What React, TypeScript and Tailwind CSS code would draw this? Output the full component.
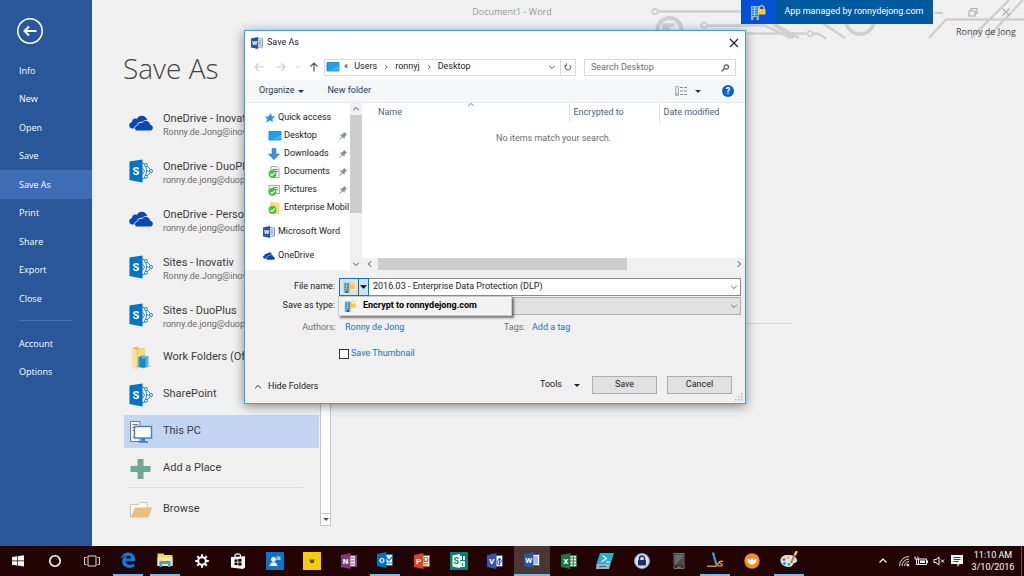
import React from 'react';

interface IconProps {
  className?: string;
}

interface OfficeIconProps extends IconProps {
  letter: string;
  color: string;
  kind?: 'lines' | 'grid' | 'mail' | 'chart' | 'tabs' | 'shapes';
}

const OfficeIcon: React.FC<OfficeIconProps> = ({ letter, color, kind = 'lines', className = 'h-4 w-4' }) => (
  <svg viewBox="0 0 16 16" className={className} aria-hidden="true">
    <rect x="8" y="2.5" width="7.5" height="11" fill="#fff" stroke={color} strokeWidth="0.8" />
    {kind === 'lines' && <path d="M10 5h4M10 7h4M10 9h4M10 11h4" stroke={color} strokeWidth="0.8" />}
    {kind === 'grid' && <path d="M9 5h6M9 8h6M9 11h6M12.3 3v10" stroke={color} strokeWidth="1" />}
    {kind === 'mail' && <path d="M9 5l3 3.5L15.3 5M9 11h6" stroke={color} strokeWidth="1.2" fill="none" />}
    {kind === 'chart' && (
      <>
        <circle cx="12" cy="6.5" r="2" fill="none" stroke={color} strokeWidth="1.2" />
        <path d="M10 10.5h4M10 12h4" stroke={color} strokeWidth="0.8" />
      </>
    )}
    {kind === 'tabs' && <path d="M10 5h3M10 8h3M10 11h3M14.3 3v10" stroke={color} strokeWidth="1.2" />}
    {kind === 'shapes' && <path d="M10 9l2.5-4L14.5 8l-3 4zM12.5 5v7" stroke={color} strokeWidth="1" fill="none" />}
    <path d="M0 2l9.5-2v16L0 14z" fill={color} />
    <text x="4.7" y="11" textAnchor="middle" fontSize="8" fontWeight="700" fill="#fff">
      {letter}
    </text>
  </svg>
);

const CloudIcon: React.FC<IconProps> = ({ className }) => (
  <svg viewBox="0 0 24 16" className={className} fill="#0b47b0" aria-hidden="true">
    <path d="M5.2 13.5H3.6C1.4 13.5.2 12 .2 10.200c0-1.700 1.200-3 2.800-3.300C3 4.900 4.500 3.500 6.300 3.500c.6 0 1.100.1 1.600.4C8.900 2 10.700.8 12.900.8c2.600 0 4.600 1.700 5.200 4.200-2-.3-3.800.5-4.800 2.100-2.500-.9-5 .6-5.200 3.100-1.700.2-2.900 1.400-2.900 3.300z" />
    <path d="M8.700 15.600c-1.700 0-2.700-1-2.700-2.400 0-1.300 1-2.300 2.500-2.400.1-2.300 2.400-3.800 4.800-2.800 1-1.600 2.500-2.400 4.300-2.100 2 .3 3.300 1.900 3.400 3.900 1.700.1 2.800 1.300 2.800 2.900 0 1.700-1.200 2.900-2.900 2.900z" />
  </svg>
);

const SharePointIcon: React.FC<IconProps> = ({ className }) => (
  <svg viewBox="0 0 24 24" className={className} aria-hidden="true">
    <g fill="none" stroke="#2a86d0" strokeWidth="1">
      <path d="M13 4l3 1M18 7l3.500 3.500M21.500 13.500L18 17M16 19l-3 1.200M16.700 8c1 2.500 1 5.500 0 8M18 12h3M13 8.500l2.500 3.500-2.500 3.500" />
      <circle cx="17" cy="6.200" r="1.500" fill="#f0f0f0" />
      <circle cx="17" cy="17.800" r="1.500" fill="#f0f0f0" />
      <circle cx="22" cy="12" r="1.500" fill="#f0f0f0" />
    </g>
    <path d="M.5 2.500L13.500.5v23L.5 21z" fill="#0072c6" />
    <text x="7" y="16" textAnchor="middle" fontSize="11" fontWeight="700" fill="#fff">
      S
    </text>
  </svg>
);

const WorkFolderIcon: React.FC<IconProps> = ({ className }) => (
  <svg viewBox="0 0 24 24" className={className} aria-hidden="true">
    <path d="M3 2l5-1.500 2 1.500h6v17l-8 3-5-2z" fill="#e6bf5a" />
    <path d="M3 2l5 2v19.500L3 21z" fill="#f8e296" />
    <path d="M9 3l7-1v15l-7 3z" fill="#f5d982" />
    <path d="M9.500 11l4-1.500V22l-4-1z" fill="#1c93c8" />
    <path d="M13.500 9.500l6 .5v11l-6 1.500z" fill="#4bbce8" />
    <path d="M12.500 13l4-1v9l-4 .5z" fill="#2386bd" />
    <path d="M19.500 19l3 .5-2.500 2z" fill="#d3d3d3" />
  </svg>
);

const ThisPcIcon: React.FC<IconProps> = ({ className }) => (
  <svg viewBox="0 0 24 24" className={className} aria-hidden="true">
    <path d="M1.500 1.500h9.500v20H1.500z" fill="#f3f3f3" stroke="#777" strokeWidth="1" />
    <path d="M3.500 4.500h5.500M3.500 7.500h2M3.500 10.500h2M3.500 17h2" stroke="#777" strokeWidth="1" />
    <rect x="5.500" y="6.500" width="17" height="11.500" fill="#fff" stroke="#3f7fc0" strokeWidth="1.400" />
    <path d="M12.500 18h3.500v3h3v1.800H9.500V21h3z" fill="#3f7fc0" />
  </svg>
);

const PlusIcon: React.FC<IconProps> = ({ className }) => (
  <svg viewBox="0 0 24 24" className={className} aria-hidden="true">
    <path d="M8.500 2h6v7H21.500v6h-7v7h-6v-7h-7V9h7z" fill="#72a694" />
  </svg>
);

const BrowseIcon: React.FC<IconProps> = ({ className }) => (
  <svg viewBox="0 0 24 24" className={className} aria-hidden="true">
    <path d="M1.500 19V6.500h8l2-2h6.500v5" fill="#fff" stroke="#e3bd84" strokeWidth="1" />
    <path d="M1.500 19.500L6 9.500h17l-3.500 10z" fill="#e8be82" />
  </svg>
);

const MonitorIcon: React.FC<IconProps> = ({ className }) => (
  <svg viewBox="0 0 14 12" className={className} aria-hidden="true">
    <path d="M1 1.500h12v8.500H1z" fill="#1ba1f2" stroke="#1579c0" strokeWidth="0.8" />
    <path d="M4 9.500l9-5v5z" fill="#3db4fb" />
  </svg>
);

const StarIcon: React.FC<IconProps> = ({ className }) => (
  <svg viewBox="0 0 12 12" className={className} aria-hidden="true">
    <path d="M7 1l.7 3.300 3.500.2-2.700 2.200.3 3.500-2.600-1.900L2 11l1.500-4L.8 4.800l3.700-.4z" fill="#2494e4" />
  </svg>
);

const DownloadIcon: React.FC<IconProps> = ({ className }) => (
  <svg viewBox="0 0 12 12" className={className} aria-hidden="true">
    <path d="M4 .5h4V6h3.500L6 11.800.5 6H4z" fill="#3a93dd" stroke="#1f6fb8" strokeWidth="0.500" />
  </svg>
);

interface SyncedIconProps extends IconProps {
  kind: 'doc' | 'picture' | 'folder';
}

const SyncedIcon: React.FC<SyncedIconProps> = ({ kind, className }) => (
  <svg viewBox="0 0 12 12" className={className} aria-hidden="true">
    {kind === 'doc' && <path d="M3 .5h6L11 2.500v9H3z" fill="#f4f6f8" stroke="#8b98a5" strokeWidth="0.800" />}
    {kind === 'picture' && <path d="M1 1.500h10.500v8H1z" fill="#e4f1fa" stroke="#8b98a5" strokeWidth="0.800" />}
    {kind === 'folder' && <path d="M2 0h4l1 1h4.500v11H2z" fill="#f9d979" />}
    {kind !== 'folder' && <path d="M5 3.500h4.500M7 5.500h3" stroke="#4a90c8" strokeWidth="1" />}
    <circle cx="4.500" cy="7.800" r="3.900" fill="#45bd35" />
    <path d="M2.500 8l1.500 1.500 2.800-3" stroke="#fff" strokeWidth="1.200" fill="none" />
  </svg>
);

const PinIcon: React.FC<IconProps> = ({ className }) => (
  <svg viewBox="0 0 10 10" className={className} aria-hidden="true">
    <path d="M6 .8l3.200 3.200-1.200.3-1.300 1.400-.3 2.200-1.700-1.700L1.500 9l-.4-.4 2.700-2.900-1.900-1.900 2.200-.2 1.500-1.500z" fill="#84909c" />
  </svg>
);

const BriefcaseLockIcon: React.FC<IconProps> = ({ className }) => (
  <svg viewBox="0 0 18 16" className={className} aria-hidden="true">
    <path d="M2 2h8v14H2z" fill="#74c0dc" />
    <path d="M3 4h6M3 6.500h6M3 9h6M3 11.500h6" stroke="#2b6f93" strokeWidth="1.200" />
    <path d="M5.500 2v11" stroke="#c4e7f2" strokeWidth="0.700" />
    <path d="M4.500 13h3v3h-3z" fill="#4d4d4d" />
    <path d="M10.500 5.500V3.500a2.300 2.300 0 014.500 0v2" stroke="#e9c46a" strokeWidth="1.300" fill="none" />
    <rect x="9" y="5" width="7.500" height="5.500" fill="#ffc931" />
  </svg>
);

interface GlyphProps extends IconProps {
  d: string;
}

// Small stroked glyph on a 10x10 grid, coloured by the text colour
const Glyph: React.FC<GlyphProps> = ({ d, className }) => (
  <svg viewBox="0 0 10 10" className={className} fill="none" stroke="currentColor" strokeWidth="1.200" aria-hidden="true">
    <path d={d} />
  </svg>
);

const UP = 'M1.500 6.500L5 3l3.500 3.500';
const DOWN = 'M1.500 3.500L5 7l3.500-3.500';
const LEFT = 'M6.500 1.500L3 5l3.500 3.500';
const RIGHT = 'M3.500 1.500L7 5 3.500 8.500';

const Caret: React.FC<IconProps> = ({ className }) => (
  <svg viewBox="0 0 8 4" className={className} fill="currentColor" aria-hidden="true">
    <path d="M0 0h8L4 4z" />
  </svg>
);

const menuItems = ['Info', 'New', 'Open', 'Save', 'Save As', 'Print', 'Share', 'Export', 'Close'];

const Sidebar: React.FC = () => (
  <nav
    className="w-[92px] shrink-0 bg-[#2a579a] font-['Open_Sans','Noto_Sans',sans-serif] text-[9px] text-white"
    aria-label="File menu"
  >
    <button type="button" aria-label="Back" className="mt-[17px] ml-4 block h-7 w-7">
      <svg viewBox="0 0 28 28" className="h-7 w-7" fill="none" stroke="#fff">
        <circle cx="14" cy="14" r="12.200" strokeWidth="1.500" />
        <path d="M20.500 14H9M13 9.500L8.500 14l4.500 4.500" strokeWidth="2" />
      </svg>
    </button>
    <div className="mt-[11px] flex h-[257px] flex-col">
      {menuItems.map((item) => (
        <button
          key={item}
          type="button"
          className={`flex flex-1 items-center pl-[19px] text-left ${item === 'Save As' ? 'bg-[#3e6db5]' : ''}`}
        >
          {item}
        </button>
      ))}
    </div>
    <hr className="mx-[19px] mt-[7px] border-[#4a74b0]" />
    <div className="mt-2 flex h-[57px] flex-col">
      {['Account', 'Options'].map((item) => (
        <button key={item} type="button" className="flex flex-1 items-center pl-[19px] text-left">
          {item}
        </button>
      ))}
    </div>
  </nav>
);

const accounts = [
  { name: 'OneDrive - Inovativ', mail: 'Ronny.de.Jong@inovativ', icon: 'cloud' },
  { name: 'OneDrive - DuoPlus', mail: 'ronny.de.jong@duoplus', icon: 'sharepoint' },
  { name: 'OneDrive - Personal', mail: 'ronny.de.jong@outlook', icon: 'cloud' },
  { name: 'Sites - Inovativ', mail: 'Ronny.de.Jong@inovativ', icon: 'sharepoint' },
  { name: 'Sites - DuoPlus', mail: 'ronny.de.jong@duoplus', icon: 'sharepoint' },
];

const places = [
  { name: 'Work Folders (Office)', Icon: WorkFolderIcon },
  { name: 'SharePoint', Icon: SharePointIcon },
  { name: 'This PC', Icon: ThisPcIcon },
  { name: 'Add a Place', Icon: PlusIcon },
];

const PlaceList: React.FC = () => (
  <div className="w-[196px] pr-px text-[11px] text-[#3b3b3b]">
    {accounts.map((account) => (
      <button
        key={account.name}
        type="button"
        className="flex h-12 w-full items-center gap-2.5 pl-[5px] text-left whitespace-nowrap"
      >
        {account.icon === 'cloud' ? (
          <CloudIcon className="h-4 w-6 shrink-0" />
        ) : (
          <SharePointIcon className="h-6 w-6 shrink-0" />
        )}
        <span className="pt-1 leading-[14px]">
          <span className="block">{account.name}</span>
          <span className="block text-[9px] leading-[13px] text-[#6a6a6a]">{account.mail}</span>
        </span>
      </button>
    ))}
    <div className="mt-0.5 flex flex-col gap-1">
      {places.map(({ name, Icon }) => (
        <button
          key={name}
          type="button"
          className={`flex h-[33px] items-center gap-2.5 pl-[5px] text-left whitespace-nowrap ${
            name === 'This PC' ? 'bg-[#c2d5f2]' : ''
          }`}
        >
          <Icon className="h-6 w-6 shrink-0" />
          {name}
        </button>
      ))}
    </div>
    <hr className="mt-0.5 mr-4 ml-1 border-[#dcdcdc]" />
    <button type="button" className="mt-[5px] flex h-[33px] items-center gap-2.5 pl-[5px] text-left">
      <BrowseIcon className="h-6 w-6 shrink-0" />
      Browse
    </button>
  </div>
);

const Circuit: React.FC = () => (
  <svg
    viewBox="640 0 384 40"
    className="pointer-events-none absolute top-0 right-0 h-10 w-96"
    fill="none"
    stroke="#d0d0d0"
    strokeWidth="2.500"
    aria-hidden="true"
  >
    <circle cx="655" cy="11.500" r="2.600" strokeWidth="1.800" />
    <path d="M658 11.500h84" />
    <circle cx="669.500" cy="30" r="12" strokeWidth="4" />
    <path d="M664 35V25h10M664 25l11 11" strokeWidth="3.500" />
    <circle cx="704" cy="25" r="2.600" strokeWidth="1.800" />
    <path d="M707 25.500h58l26 12.500M745 33.500h61" />
    <path d="M772 24l22 14M818 20l27 18M775 24l24 14" />
    <circle cx="810" cy="33.500" r="2.600" strokeWidth="1.800" />
    <path d="M813 33.500h5l8 5" />
    <circle cx="860" cy="20" r="14" strokeWidth="4" />
    <path d="M929 38l17-18.500h78M971 38l38-38M987 38l36-38" />
  </svg>
);

const Header: React.FC = () => (
  <header className="font-['Open_Sans','Noto_Sans',sans-serif] text-[9px]">
    <div className="flex h-6 items-center">
      <p className="flex-1 text-center text-[#999]">Document1 - Word</p>
      <div className="relative flex w-[92px] items-center justify-between pr-[13px] pl-0.5 text-[#b0b0b0]">
        <button type="button" aria-label="Minimize" className="h-2.5 w-2.5">
          <Glyph d="M1 6h8" />
        </button>
        <button type="button" aria-label="Restore" className="h-2.5 w-2.5">
          <Glyph d="M1 4h6v5H1zM3 4V1.500h6v5H7" />
        </button>
        <button type="button" aria-label="Close window" className="h-2.5 w-2.5">
          <Glyph d="M1.500 1.500l7 7M8.500 1.500l-7 7" />
        </button>
      </div>
    </div>
    <p className="relative h-4 pr-2 text-right leading-4 text-[#444]">Ronny de Jong</p>
  </header>
);

const ManagedBanner: React.FC = () => (
  <div className="absolute top-0 right-[91px] flex h-6 w-48 items-center bg-[#005a9e] text-[9px] text-white">
    <span className="flex h-full w-[34px] items-center justify-center bg-[#0050d8]">
      <BriefcaseLockIcon className="h-4 w-[18px]" />
    </span>
    <span className="flex-1 text-center whitespace-nowrap">App managed by ronnydejong.com</span>
  </div>
);

const quickItems = [
  { name: 'Desktop', icon: <MonitorIcon className="h-3 w-3.5" />, pinned: true },
  { name: 'Downloads', icon: <DownloadIcon className="h-3 w-3" />, pinned: true },
  { name: 'Documents', icon: <SyncedIcon kind="doc" className="h-3 w-3" />, pinned: true },
  { name: 'Pictures', icon: <SyncedIcon kind="picture" className="h-3 w-3" />, pinned: true },
  { name: 'Enterprise Mobil', icon: <SyncedIcon kind="folder" className="h-3 w-3" />, pinned: false },
];

const FolderTree: React.FC = () => (
  <div className="flex w-[116px] shrink-0">
    <div className="w-[104px] overflow-hidden pt-1.5 whitespace-nowrap">
      <button type="button" className="flex h-[18px] items-center gap-0.5 pl-[18px]">
        <StarIcon className="h-3 w-3" />
        Quick access
      </button>
      {quickItems.map((item) => (
        <button key={item.name} type="button" className="flex h-[18px] w-full items-center pl-[22px]">
          <span className="flex w-4 shrink-0 items-center justify-start">{item.icon}</span>
          <span className="flex-1 text-left">{item.name}</span>
          {item.pinned && <PinIcon className="mr-0.5 h-2.5 w-2.5" />}
        </button>
      ))}
      <button type="button" className="mt-1.5 flex h-[18px] items-center gap-[3px] pl-[17px]">
        <OfficeIcon letter="W" color="#2a579a" className="h-3 w-3" />
        Microsoft Word
      </button>
      <button type="button" className="mt-1.5 flex h-[18px] items-center gap-[3px] pl-[17px]">
        <CloudIcon className="h-3 w-3" />
        OneDrive
      </button>
    </div>
    <div className="flex w-3 flex-col items-center bg-[#f0f0f0] text-[#444]">
      <Glyph d={UP} className="my-0.5 h-2 w-2" />
      <div className="h-[98px] w-3 bg-[#cdcdcd]" />
      <Glyph d={DOWN} className="mt-auto mb-0.5 h-2 w-2" />
    </div>
  </div>
);

const FileList: React.FC = () => (
  <div className="flex flex-1 flex-col">
    <table className="w-full table-fixed text-left text-[#4c607a]">
      <thead>
        <tr className="h-5">
          <th className="relative w-[207px] border-r border-[#e5e5e5] pl-4 font-normal">
            Name
            <Glyph d={UP} className="absolute -top-0.5 left-[105px] h-2 w-2 text-[#777]" />
          </th>
          <th className="w-[90px] border-r border-[#e5e5e5] pl-1 font-normal">Encrypted to</th>
          <th className="pl-1 font-normal">Date modified</th>
        </tr>
      </thead>
      <tbody>
        <tr>
          <td colSpan={3} className="h-8 text-center text-[#6d6d6d]">
            No items match your search.
          </td>
        </tr>
      </tbody>
    </table>
    <div className="mt-auto flex h-3 items-center bg-[#f0f0f0] text-[#444]">
      <Glyph d={LEFT} className="mx-1 h-2 w-2" />
      <div className="h-full w-[249px] bg-[#cdcdcd]" />
      <Glyph d={RIGHT} className="mr-0.5 ml-auto h-2 w-2" />
    </div>
  </div>
);

const SaveForm: React.FC = () => (
  <div className="bg-[#f0f0f0] pt-2 pr-1 pb-[9px]">
    <div className="relative flex h-[18px] items-stretch">
      <label htmlFor="file-name" className="flex w-[93px] items-center justify-end pr-1">
        File name:
      </label>
      <button
        type="button"
        aria-label="Encryption options"
        aria-expanded="true"
        className="flex w-[30px] items-center border border-[#0078d7] bg-[#e1e1e1]"
      >
        <BriefcaseLockIcon className="mx-0.5 h-3 w-[14px]" />
        <span className="flex h-full flex-1 items-center justify-center border-l border-[#555] bg-[#cce4f7] text-black">
          <Caret className="h-1 w-[7px]" />
        </span>
      </button>
      <input
        id="file-name"
        type="text"
        defaultValue="2016.03 - Enterprise Data Protection (DLP)"
        className="min-w-0 flex-1 border border-l-0 border-[#8a8a8a] bg-white pl-1 outline-none"
      />
      <Glyph d={DOWN} className="pointer-events-none absolute top-[5px] right-[3px] h-2 w-2 text-[#666]" />
      {/* Encryption drop-down, opened over the type row */}
      <div
        role="menu"
        className="absolute top-[18px] left-[92px] z-10 w-[174px] border border-[#ccc] bg-[#f2f2f2] shadow-[2px_2px_2px_rgba(0,0,0,0.5)]"
      >
        <button type="button" role="menuitem" className="flex h-[18px] items-center gap-1.5 pl-1 font-bold text-black">
          <BriefcaseLockIcon className="h-3 w-[14px]" />
          Encrypt to ronnydejong.com
        </button>
      </div>
    </div>
    <div className="relative mt-px flex h-[18px]">
      <label htmlFor="file-type" className="flex w-[93px] items-center justify-end pr-1">
        Save as type:
      </label>
      <select id="file-type" className="flex-1 appearance-none border border-[#adadad] bg-[#e1e1e1] outline-none">
        <option value="docx"></option>
      </select>
      <Glyph d={DOWN} className="pointer-events-none absolute top-[5px] right-[3px] h-2 w-2 text-[#666]" />
    </div>
    <div className="mt-1 flex h-[18px] items-center">
      <span className="w-[93px] pr-[3px] text-right text-[#707070]">Authors:</span>
      <a href="#authors" className="w-[162px] pl-1.5 text-[#1a6fcb]">
        Ronny de Jong
      </a>
      <span className="w-[31px] pl-[3px] text-[#707070]">Tags:</span>
      <a href="#tags" className="text-[#1a6fcb]">
        Add a tag
      </a>
    </div>
    <label className="mt-2 ml-[93px] flex h-[18px] w-fit items-center gap-0.5 text-[#1a6fcb]">
      <input type="checkbox" className="h-2.5 w-2.5 appearance-none border border-[#333] bg-white" />
      Save Thumbnail
    </label>
    <div className="mt-[13px] flex h-[18px] items-stretch pr-[9px]">
      <button type="button" className="mt-1 flex items-center gap-1.5 pl-2">
        <Glyph d={UP} className="h-2 w-2" />
        Hide Folders
      </button>
      <button type="button" className="mr-3 ml-auto flex items-center gap-3">
        Tools
        <Caret className="h-[3px] w-1.5" />
      </button>
      <button type="button" className="w-[65px] border border-[#adadad] bg-[#e1e1e1]">
        Save
      </button>
      <button type="button" className="ml-2.5 w-[65px] border border-[#adadad] bg-[#e1e1e1]">
        Cancel
      </button>
    </div>
  </div>
);

const SaveDialog: React.FC = () => (
  <section
    role="dialog"
    aria-label="Save As"
    className="absolute top-[30px] left-[244px] w-[502px] border border-[#4a9bdc] bg-white text-[9px] text-[#222] shadow-[0_2px_10px_rgba(0,0,0,0.45)]"
  >
    <div className="flex h-[23px] items-center px-1.5">
      <OfficeIcon letter="W" color="#2a579a" className="h-3 w-3" />
      <h2 className="ml-1">Save As</h2>
      <button type="button" aria-label="Close" className="ml-auto h-2.5 w-2.5">
        <Glyph d="M1 1l8 8M9 1L1 9" />
      </button>
    </div>
    <div className="flex h-[26px] items-center px-[9px]">
      <button type="button" aria-label="Back" className="h-2.5 w-2.5 text-[#ccc]">
        <Glyph d="M9.500 5H1M4.500 1.500L1 5l3.500 3.500" />
      </button>
      <button type="button" aria-label="Forward" className="ml-3 h-2.5 w-2.5 text-[#ccc]">
        <Glyph d="M.5 5H9M5.500 1.500L9 5 5.500 8.500" />
      </button>
      <Glyph d={DOWN} className="ml-[9px] h-1.5 w-1.5 text-[#ccc]" />
      <button type="button" aria-label="Up" className="ml-2 h-2.5 w-2.5 text-[#555]">
        <Glyph d="M5 9.500V1M1.500 4.500L5 1l3.500 3.500" />
      </button>
      <div className="ml-[5px] flex h-[17px] flex-1 items-center border border-[#d9d9d9]">
        <MonitorIcon className="mx-px h-3 w-3.5" />
        <span className="ml-[3px]">«</span>
        <span className="ml-1.5">Users</span>
        <Glyph d={RIGHT} className="mx-1.5 h-1.5 w-1.5" />
        <span>ronnyj</span>
        <Glyph d={RIGHT} className="mx-1.5 h-1.5 w-1.5" />
        <span>Desktop</span>
        <Glyph d={DOWN} className="mr-1 ml-auto h-2 w-2 text-[#555]" />
        <button type="button" aria-label="Refresh" className="h-full border-l border-[#d9d9d9] px-[3px] text-[#555]">
          <Glyph d="M3 2.500a3.500 3.500 0 104 0M3 .5v2.500H.8" className="h-2 w-2" />
        </button>
      </div>
      <div className="relative ml-2 w-[152px]">
        <input
          type="search"
          aria-label="Search Desktop"
          placeholder="Search Desktop"
          className="block h-[17px] w-full border border-[#d9d9d9] pl-1.5 outline-none placeholder:text-[#6d6d6d]"
        />
        <Glyph
          d="M4.500 5.500L1.500 8.500M8.500 4a2.200 2.200 0 11-4.400 0A2.200 2.200 0 018.500 4z"
          className="pointer-events-none absolute top-1 right-1.5 h-2.5 w-2.5 text-[#555]"
        />
      </div>
    </div>
    <div className="flex h-[23px] items-center border-b border-[#e8e9ea] bg-[#f5f6f7] pr-[11px] pl-[14px] text-[#1e395b]">
      <button type="button" className="flex items-center gap-1">
        Organize
        <Caret className="h-[3px] w-1.5" />
      </button>
      <button type="button" className="ml-[23px]">
        New folder
      </button>
      <button type="button" aria-label="Change view" className="ml-auto flex items-center gap-2">
        <svg viewBox="0 0 12 10" className="h-2.5 w-3" aria-hidden="true">
          <path d="M.5.5h3v9h-3z" fill="#e6eaee" stroke="#a0a7ae" strokeWidth="0.800" />
          <path d="M1 8h2" stroke="#d88" strokeWidth="1.500" />
          <path d="M5 1.500h3M9 1.500h3M5 5h3M9 5h3M5 8.500h3M9 8.500h3" stroke="#848c94" strokeWidth="1" />
        </svg>
        <Caret className="h-[3px] w-1.5" />
      </button>
      <button
        type="button"
        aria-label="Help"
        className="ml-[21px] h-3 w-3 rounded-full bg-[#0a63c4] text-center leading-3 font-bold text-white"
      >
        ?
      </button>
    </div>
    <div className="flex h-[167px] pl-px">
      <FolderTree />
      <FileList />
    </div>
    <div className="bg-[#f0f0f0] pl-px">
      <SaveForm />
    </div>
    <svg viewBox="0 0 8 8" className="absolute right-0.5 bottom-0.5 h-2 w-2 text-[#b5b5b5]" fill="currentColor" aria-hidden="true">
      <path d="M6 0h1.500v1.500H6zM6 3h1.500v1.500H6zM6 6h1.500v1.500H6zM3 3h1.500v1.500H3zM3 6h1.500v1.500H3zM0 6h1.500v1.500H0z" />
    </svg>
  </section>
);

const taskApps: { name: string; icon: React.ReactNode; state?: 'open' | 'active' }[] = [
  {
    name: 'Start',
    icon: (
      <svg viewBox="0 0 16 16" className="h-4 w-4" fill="#fff">
        <path d="M2 4l5-.7v4.200H2zM7.700 3.200L14 2.300v5.200H7.700zM2 8.200h5v4.300L2 11.800zM7.700 8.200H14v5.300l-6.300-.9z" />
      </svg>
    ),
  },
  {
    name: 'Cortana',
    icon: (
      <svg viewBox="0 0 16 16" className="h-4 w-4" fill="none" stroke="#fff" strokeWidth="1.600">
        <circle cx="8" cy="8" r="5.200" />
      </svg>
    ),
  },
  {
    name: 'Task View',
    icon: (
      <svg viewBox="0 0 16 16" className="h-4 w-4" fill="none" stroke="#ddd" strokeWidth="1">
        <path d="M4 3h8v10H4zM2.500 4.500h-2v7h2M13.500 4.500h2v7h-2" />
      </svg>
    ),
  },
  {
    name: 'Edge',
    state: 'open',
    icon: (
      <svg viewBox="0 0 16 16" className="h-4 w-4" fill="#0f7ae0">
        <path d="M.8 7.300C1.300 3 4.300.5 8.300.5c4.200 0 7 2.900 7 7.200v1.600H5.600c.1 2.200 1.900 3.400 4.300 3.400 1.700 0 3-.4 4.300-1.200v3.200c-1.400.8-3 1.100-4.900 1.100-4.200 0-7.100-2.400-7.100-6.300 0-2.800 1.500-4.900 4-6.200C3.700 3.900 2 5.400.8 7.300zM5.700 6.500h5.500c0-1.700-.9-2.800-2.700-2.800-1.700 0-2.600 1.200-2.800 2.800z" />
      </svg>
    ),
  },
  {
    name: 'File Explorer',
    state: 'open',
    icon: (
      <svg viewBox="0 0 16 16" className="h-4 w-4">
        <path d="M.5 1.500h6l1 1.500h8v11H.5z" fill="#f5d472" />
        <path d="M.5 5h15v9H.5z" fill="#fde69b" />
        <path d="M2.500 9h11v6H11v-3H5v3H2.500z" fill="#35a3e6" />
      </svg>
    ),
  },
  {
    name: 'Settings',
    icon: (
      <svg viewBox="0 0 16 16" className="h-4 w-4" fill="none" stroke="#fff">
        <circle cx="8" cy="8" r="3.800" strokeWidth="2" />
        <path d="M8 1.200V4M8 12v2.800M1.200 8H4M12 8h2.800M3.200 3.200l2 2M10.800 10.800l2 2M12.800 3.200l-2 2M5.200 10.800l-2 2" strokeWidth="2" />
      </svg>
    ),
  },
  {
    name: 'Store',
    icon: (
      <svg viewBox="0 0 16 16" className="h-4 w-4">
        <path d="M1 4l14-.8v11.300L13 16 1 14.500z" fill="#fff" />
        <path d="M5 5V2.500C5 .8 10.500 0 10.500 2.500V5" fill="none" stroke="#fff" strokeWidth="1.200" />
        <path d="M4.500 6.500l3-.3v2.600h-3zM8.200 6.100l3.300-.4v3.100H8.200zM4.500 9.500h3v2.800l-3-.3zM8.200 9.500h3.300v3.200l-3.300-.3z" fill="#260505" />
      </svg>
    ),
  },
  {
    name: 'Contacts',
    icon: (
      <svg viewBox="0 0 18 18" className="h-[18px] w-[18px]">
        <path d="M0 0h18v18H0z" fill="#0e72c8" />
        <circle cx="7.500" cy="7.500" r="2.400" fill="#fff" />
        <path d="M3.500 14c.5-3 2-3.800 4-3.800s3.500.8 4 3.800z" fill="#fff" />
        <path d="M10.500 4.500h4v3.500h-4z" fill="#a8cdef" />
      </svg>
    ),
  },
  {
    name: 'Notes',
    icon: (
      <svg viewBox="0 0 18 18" className="h-[18px] w-[18px]">
        <path d="M0 0h18v18H0z" fill="#f5cb12" />
        <path d="M6.800 7l2 1 2.500-1-.3 3.500-2.500.8L6.800 10z" fill="#4c4010" />
        <path d="M8.200 9h1.500" stroke="#f5cb12" strokeWidth="0.800" />
      </svg>
    ),
  },
  { name: 'OneNote', icon: <OfficeIcon letter="N" color="#80397b" kind="tabs" /> },
  { name: 'Outlook', state: 'open', icon: <OfficeIcon letter="O" color="#0072c6" kind="mail" /> },
  { name: 'PowerPoint', icon: <OfficeIcon letter="P" color="#d24726" kind="chart" /> },
  {
    name: 'Sway',
    icon: (
      <svg viewBox="0 0 18 18" className="h-[18px] w-[18px]">
        <path d="M0 0h18v18H0z" fill="#008272" />
        <path d="M10 4h5v11h-5z" fill="#fff" />
        <path d="M12.500 4v4M10 8.500h5M12.500 11v3" stroke="#008272" strokeWidth="1.200" />
        <path d="M2.500 3.500L10 2v14l-7.500-1.500z" fill="#fff" />
        <text x="6.300" y="12.200" textAnchor="middle" fontSize="9" fontWeight="700" fill="#008272">
          S
        </text>
      </svg>
    ),
  },
  { name: 'Visio', icon: <OfficeIcon letter="V" color="#3955a3" kind="shapes" /> },
  { name: 'Word', state: 'active', icon: <OfficeIcon letter="W" color="#2a579a" /> },
  { name: 'Excel', icon: <OfficeIcon letter="X" color="#217346" kind="grid" /> },
  {
    name: 'PowerShell',
    icon: (
      <svg viewBox="0 0 18 16" className="h-4 w-[18px]">
        <path d="M4 0h14l-3.500 11H.5z" fill="#1fb3cc" />
        <path d="M.5 11h14L13 16H0z" fill="#9fb0b8" />
        <path d="M6.500 2.500l4 3-5 3.500M10 9h4" stroke="#fff" strokeWidth="1.200" fill="none" />
        <path d="M3 13.500h7" stroke="#506068" strokeWidth="1" />
      </svg>
    ),
  },
  {
    name: 'Password manager',
    icon: (
      <svg viewBox="0 0 16 16" className="h-4 w-4">
        <circle cx="8" cy="8" r="7.500" fill="#d9e0f5" stroke="#7d93cf" strokeWidth="1" />
        <path d="M5.500 8V5.500a2.500 2.500 0 015 0V8" fill="none" stroke="#222e5c" strokeWidth="1.500" />
        <rect x="4" y="7" width="8" height="5.500" rx="0.800" fill="#222e5c" />
      </svg>
    ),
  },
  {
    name: 'Phone',
    icon: (
      <svg viewBox="0 0 16 16" className="h-4 w-4">
        <rect x="3" y="0.500" width="10" height="15" fill="#2b2b2b" stroke="#8a8a8a" strokeWidth="0.800" />
        <path d="M4 1.500h8v10.500H4z" fill="#6a6a6a" />
        <path d="M4 12l8-8v8z" fill="#4a4a4a" />
        <path d="M6 14h4" stroke="#bbb" strokeWidth="0.800" />
      </svg>
    ),
  },
  {
    name: 'Inking',
    state: 'open',
    icon: (
      <svg viewBox="0 0 18 16" className="h-4 w-[18px]" fill="none">
        <path d="M7 .5l2 7.500 2 6" stroke="#4e9ad6" strokeWidth="2.200" />
        <path d="M1 14.200h9l4-5" stroke="#c98f34" strokeWidth="1.400" />
        <path d="M17 9.500c-2.500-.8-4 .2-3.500 1.200s3 .8 2.800 2.200-3 1.500-4.300.6" stroke="#d49a3a" strokeWidth="1.400" />
      </svg>
    ),
  },
  {
    name: 'Crown',
    icon: (
      <svg viewBox="0 0 16 16" className="h-4 w-4">
        <circle cx="8" cy="8" r="7.700" fill="#f28c28" />
        <path d="M3 6c1.500-.2 2.500.3 3.200 1.300L8 4.500l1.800 2.800C10.500 6.300 11.500 5.800 13 6c-.5 3.500-2 5.500-5 5.500S3.500 9.500 3 6z" fill="#fff" />
      </svg>
    ),
  },
  {
    name: 'Paint',
    state: 'open',
    icon: (
      <svg viewBox="0 0 18 18" className="h-[18px] w-[18px]">
        <path d="M8 4c5 0 9 2 9 5.500 0 2.500-2.500 2-3.500 3S12.500 16 9 16c-5 0-8.500-3-8.500-6.500S3.500 4 8 4z" fill="#d5ebf7" />
        <circle cx="4" cy="8.500" r="1.500" fill="#e0482f" />
        <circle cx="8" cy="6.500" r="1.500" fill="#f1b52c" />
        <circle cx="4.500" cy="12.500" r="1.400" fill="#2e8fd8" />
        <circle cx="9" cy="13.500" r="1.400" fill="#44a948" />
        <path d="M16 1l-5 11" stroke="#c07b32" strokeWidth="2" />
        <path d="M16.800 0L15 4" stroke="#f3d29b" strokeWidth="2" />
      </svg>
    ),
  },
];

const Taskbar: React.FC = () => (
  <footer className="flex h-[30px] items-stretch bg-[#230404] text-white">
    <div className="flex w-[807px]">
      {taskApps.map((app) => (
        <button
          key={app.name}
          type="button"
          aria-label={app.name}
          className={`flex flex-1 flex-col items-center justify-end ${app.state === 'active' ? 'bg-[#4a3434]' : ''}`}
        >
          <span className="flex flex-1 items-center">{app.icon}</span>
          {app.state && <span className={`h-0.5 bg-[#76b9ed] ${app.state === 'active' ? 'w-full' : 'w-[30px]'}`} />}
        </button>
      ))}
    </div>
    <div className="ml-auto flex items-center pr-0.5">
      <Glyph d={UP} className="h-2.5 w-2.5" />
      <svg viewBox="0 0 12 12" className="ml-2.5 h-3 w-3" fill="none" stroke="#ddd" strokeWidth="1" aria-hidden="true">
        <path d="M1.500 11A9.500 9.500 0 0111 1.500M4 11a7 7 0 017-7M6.500 11A4.500 4.500 0 0111 6.500" />
        <circle cx="9.800" cy="10" r="1" fill="#fff" />
      </svg>
      <svg viewBox="0 0 14 12" className="ml-1 h-3 w-3.5" fill="none" stroke="#fff" strokeWidth="1" aria-hidden="true">
        <path d="M4.500 4h8v5.500h-8zM13.500 5.500v2.500M1 1.500v2.500h3V1.500M2.500 4v5.500h2" />
        <path d="M6 6.700h5" strokeWidth="2.500" />
      </svg>
      <svg viewBox="0 0 14 12" className="ml-1 h-3 w-3.5" fill="none" stroke="#fff" strokeWidth="1" aria-hidden="true">
        <path d="M2 4.500h2L7 2v8L4 7.500H2zM9 4.500l3 3M12 4.500l-3 3" />
      </svg>
      <svg viewBox="0 0 12 12" className="ml-[5px] h-3 w-3" aria-hidden="true">
        <path d="M0 0h12v9H8.500L6.500 12V9H0z" fill="#fff" />
        <path d="M2.500 2.500h7M2.500 4.500h7M2.500 6.500h5" stroke="#230404" strokeWidth="0.800" />
      </svg>
      <div className="ml-2 w-11 text-center text-[9px] leading-3 whitespace-nowrap">
        <p>11:10 AM</p>
        <p>3/10/2016</p>
      </div>
      <div className="ml-1.5 h-[30px] w-px bg-[#6b5656]" />
    </div>
  </footer>
);

const App: React.FC = () => (
  <div className="relative flex min-h-screen flex-col bg-[#f0f0f0] font-['Roboto','Noto_Sans',sans-serif]">
    <div className="flex flex-1">
      <Sidebar />
      <main className="relative min-w-0 flex-1">
        <Circuit />
        <Header />
        <h1 className="mt-[5px] pl-[31px] font-['Open_Sans','Noto_Sans',sans-serif] text-[28px] leading-[46px] font-light text-[#444]">
          Save As
        </h1>
        <div className="mt-2 flex pl-8">
          <PlaceList />
          <div className="flex w-[11px] flex-col border border-[#c6c6c6] bg-white text-[#555]">
            <div className="mt-auto flex h-3 items-center justify-center border-t border-[#c6c6c6]">
              <Caret className="h-[3px] w-1.5" />
            </div>
          </div>
          <div className="flex-1">
            <hr className="mt-56 w-[461px] border-[#d5d5d5]" />
          </div>
        </div>
      </main>
    </div>
    <Taskbar />
    <ManagedBanner />
    <SaveDialog />
  </div>
);

export default App;
